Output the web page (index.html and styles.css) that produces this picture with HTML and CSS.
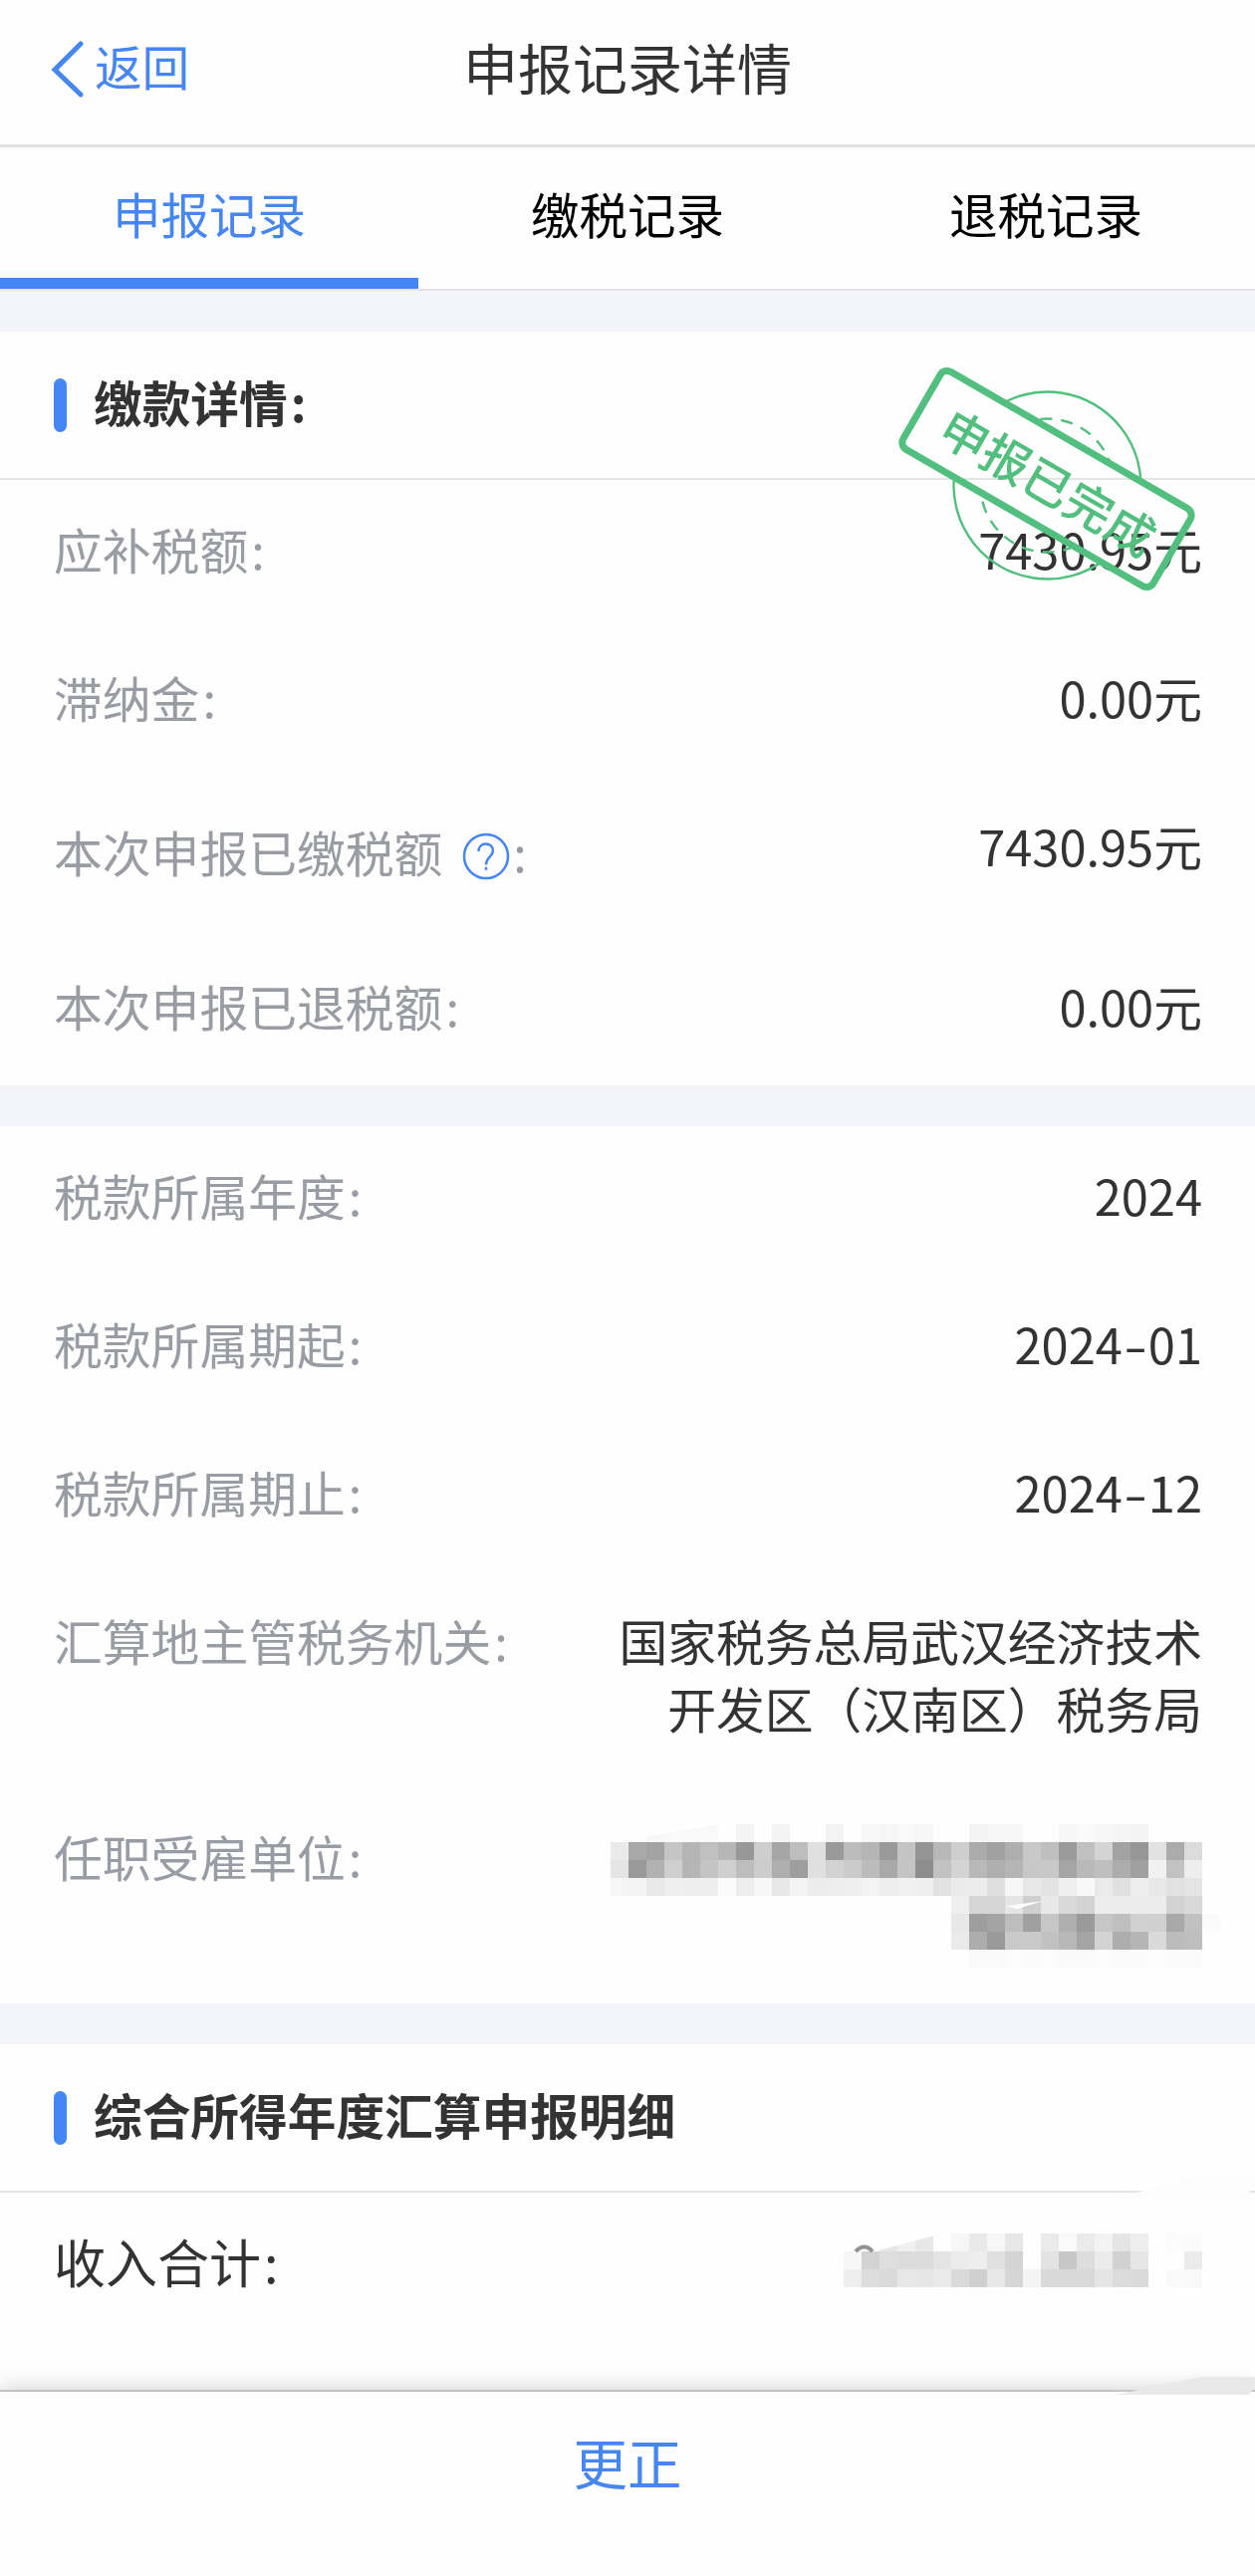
FILE: index.html
```
<!DOCTYPE html>
<html lang="zh-CN">
<head>
  <meta charset="UTF-8" />
  <title>申报记录详情</title>
  <link rel="stylesheet" href="styles.css">
</head>
<body>

  <header class="navbar">
    <a class="back" href="#">
      <svg class="back-icon" viewBox="0 0 34 58" aria-hidden="true"><path d="M31 4L5 30l26 25"/></svg>
      <span>返回</span>
    </a>
    <h1>申报记录详情</h1>
  </header>

  <nav class="tabs">
    <a class="tab active" href="#">申报记录</a>
    <a class="tab" href="#">缴税记录</a>
    <a class="tab" href="#">退税记录</a>
  </nav>

  <section class="card">
    <h2 class="card-title">缴款详情<span class="colon">:</span></h2>
    <svg class="stamp" viewBox="-155 -120 310 240" aria-hidden="true">
      <mask id="outside">
        <rect x="-200" y="-200" width="400" height="400" fill="#fff"/>
        <rect x="-145" y="-45" width="290" height="90" rx="8" fill="#000"/>
      </mask>
      <g transform="rotate(30)">
        <g mask="url(#outside)">
          <circle cx="3.7" cy="5.4" r="94" stroke-width="2.4"/>
          <circle cx="3.7" cy="5.4" r="67" stroke-width="2.4" stroke-dasharray="12 9"/>
        </g>
        <rect x="-145" y="-45" width="290" height="90" rx="8" stroke-width="7"/>
        <text x="3" y="21" text-anchor="middle">申报已完成</text>
      </g>
    </svg>
    <div class="row"><span class="label">应补税额<span class="colon">:</span></span><span class="value">7430.95元</span></div>
    <div class="row"><span class="label">滞纳金<span class="colon">:</span></span><span class="value">0.00元</span></div>
    <div class="row row-help">
      <span class="label">本次申报已缴税额
        <svg class="help" viewBox="0 0 48 48" aria-hidden="true">
          <circle cx="24" cy="24" r="22"/>
          <path d="M16.500 19c0-4.500 3-7.500 7.200-7.500s7.300 2.900 7.300 7c0 5.200-7 6.500-7 14"/>
          <path d="M24 34.800v3"/>
        </svg><span class="colon">:</span></span>
      <span class="value">7430.95元</span>
    </div>
    <div class="row"><span class="label">本次申报已退税额<span class="colon">:</span></span><span class="value">0.00元</span></div>
  </section>

  <section class="card">
    <div class="row"><span class="label">税款所属年度<span class="colon">:</span></span><span class="value">2024</span></div>
    <div class="row"><span class="label">税款所属期起<span class="colon">:</span></span><span class="value">2024<span class="dash">-</span>01</span></div>
    <div class="row"><span class="label">税款所属期止<span class="colon">:</span></span><span class="value">2024<span class="dash">-</span>12</span></div>
    <div class="row"><span class="label">汇算地主管税务机关<span class="colon">:</span></span><span class="value">国家税务总局武汉经济技术开发区（汉南区）税务局</span></div>
    <div class="row">
      <span class="label">任职受雇单位<span class="colon">:</span></span>
      <svg class="mosaic mosaic-company" id="company" viewBox="0 0 612 144"></svg>
    </div>
  </section>

  <section class="card card-last">
    <h2 class="card-title">综合所得年度汇算申报明细</h2>
    <svg class="smudge smudge-top" viewBox="0 0 140 24" aria-hidden="true"><path d="M0 24L86 0h54v10l-6 8v6z"/></svg>
    <div class="row row-total">
      <span class="label">收入合计<span class="colon">:</span></span>
      <svg class="mosaic mosaic-income" id="income" viewBox="0 0 360 54"></svg>
    </div>
  </section>

  <footer class="bottom-bar">
    <a href="#">更正</a>
    <svg class="smudge" viewBox="0 0 140 18" aria-hidden="true"><path d="M0 18L86 0h54v10l-6 8z"/></svg>
  </footer>

<script>
  // two hex digits = gray level of one cell, ".." = empty cell
  const CELL = 18;

  const company = [
    '....f7f9f9f9..f4..f4....f3..f8f6f9f6....f4f6f6....f6faf7f5f4........',
    'eaa9a3c5b5c0b698cea5bde09abcb599c495b8ceaba1aec8bf9bc0d4a296e2abdb..',
    'e599b1cfb5c4d0bdccae9ee0d2cbbca8c48dc2d4b8afb5c7c8a5b9bfada0f1c2ee..',
    'f6f4e9efeeeefbedf7e7f4ecedeff3eef1efe1ebecdff6e7e3eff8eae0eee8e1e4..',
    '......................................efd5d5e5cfe8d8d3edecececd2d9..',
    '......................................e89ea4bda0c6ae9ac6bfd1d0a8c1fb',
    '......................................eaad9ac9c9c1b7a4d3adb5dabcbe..',
    '......................................fef9fafcfbfcfafafcfbfbfcfbfb..'
  ];

  const income = [
    '....e6f0e7..f6e9f6e7..eafaeaf3e5ee..fcfb',
    'f7d3dedbdbe4eceee0d4..e3c7ddebd1e6....eb',
    'eedddae7e6eadad0e8d6f4d9d9d9e5dcda..faf9'
  ];

  function drawMosaic(id, rows, extra) {
    let out = '';
    rows.forEach((row, y) => {
      row.match(/../g).forEach((c, x) => {
        if (c === '..') return;
        out += `<rect x="${x * CELL}" y="${y * CELL}" width="${CELL}" height="${CELL}" fill="#${c}${c}${c}"/>`;
      });
    });
    document.getElementById(id).innerHTML = out + extra;
  }

  drawMosaic('company', company,
    '<path d="M30 0h80L36 12H30z M397 82l38-5-27 8z" fill="#fefefe"/>');
  drawMosaic('income', income,
    '<path d="M30 0h62v2L31 18z" fill="#fefefe"/><path d="M12 18q9-9 17 0" fill="none" stroke="#929292" stroke-width="4"/>');
</script>

</body>
</html>
```
FILE: styles.css
```
* {
  box-sizing: border-box;
}

body {
  margin: 0;
  height: 2587px;
  overflow: hidden;
  display: flex;
  flex-direction: column;
  font-family: "Noto Sans CJK SC", sans-serif;
  font-size: 48.8px;
  line-height: 68px;
  color: #333;
  background: #f4f5fa;
}

a {
  color: #4586f0;
  text-decoration: none;
}

.navbar {
  display: grid;
  grid-template-columns: 1fr auto 1fr;
  align-items: center;
  height: 148px;
  padding: 0 50px 13px;
  background: #fefefe;
  border-bottom: 3px solid #e3e3e3;
}

.navbar h1 {
  margin: 0;
  font-size: 55px;
  font-weight: 400;
}

.back {
  display: flex;
  align-items: center;
  gap: 11px;
  font-size: 47.5px;
}

.back-icon {
  width: 34px;
  height: 58px;
  margin-top: 6px;
  fill: none;
  stroke: #4586f0;
  stroke-width: 5;
  stroke-linecap: round;
}

.tabs {
  display: flex;
  height: 144px;
  background: #fefefe;
  border-bottom: 2px solid #e3e4e6;
}

.tab {
  flex: 1;
  padding-top: 32px;
  text-align: center;
  font-size: 48.5px;
  color: #000;
}

.tab.active {
  color: #4586f0;
  border-bottom: 11px solid #4486f4;
}

.card {
  position: relative;
  margin-top: 41px;
  background: #fefefe;
}

.card-last {
  flex: 1;
}

.card-title {
  display: flex;
  align-items: center;
  height: 149px;
  margin: 0;
  padding: 0 54px 8px;
  font-size: 48.7px;
  font-weight: 700;
  border-bottom: 2px solid #e4e4e4;
}

.card-title::before {
  content: "";
  width: 13px;
  height: 54px;
  margin: 8px 27px 0 0;
  border-radius: 7px;
  background: #4486f4;
}

.row {
  display: flex;
  justify-content: space-between;
  padding: 35px 53px 46px 54px;
}

.label {
  color: #999ca3;
  white-space: nowrap;
}

.colon {
  margin-left: 3px;
}

.value {
  width: 590px;
  text-align: right;
}

.dash {
  display: inline-block;
  width: 26px;
  text-align: center;
  transform: scaleX(1.4);
}

.row-help {
  height: 161px;
}

.row-help .label {
  padding-top: 6px;
}

.help {
  width: 48px;
  height: 48px;
  margin-left: 9px;
  vertical-align: -8px;
  fill: none;
  stroke: #4586f0;
  stroke-width: 2.5;
}

.stamp {
  position: absolute;
  top: 28px;
  left: 896px;
  width: 310px;
  height: 240px;
  fill: none;
  stroke: #52bf7e;
}

.stamp text {
  font-size: 48px;
  font-weight: 500;
  fill: #52bf7e;
  stroke: none;
}

.mosaic {
  flex: none;
}

.mosaic-company {
  width: 612px;
  height: 144px;
  margin: 2px -18px -10px 0;
}

.mosaic-income {
  width: 360px;
  height: 54px;
  margin-top: 6px;
}

.row-total {
  font-size: 52px;
}

.row-total .label {
  color: #333;
}

.bottom-bar {
  position: absolute;
  top: 2400px;
  left: 0;
  width: 100%;
  height: 187px;
  padding-top: 36px;
  text-align: center;
  font-size: 54.5px;
  background: #fefefe;
  border-top: 2px solid #c4c4c4;
  box-shadow: 0 0 22px rgba(0, 0, 0, 0.2);
}

.smudge {
  position: absolute;
  top: -15px;
  right: 0;
  width: 140px;
  height: 18px;
  fill: #e9e9e9;
}

.smudge-top {
  top: 131px;
  height: 24px;
  fill: #fcfcfc;
}
```
